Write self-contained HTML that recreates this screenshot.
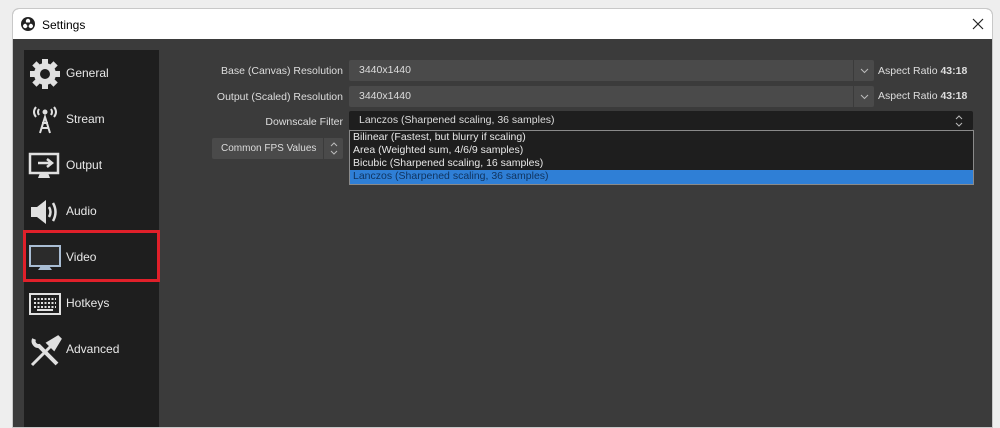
<!DOCTYPE html>
<html><head><style>
*{margin:0;padding:0;box-sizing:border-box}
body{width:1000px;height:416px;background:#eeeeee;font-family:"Liberation Sans",sans-serif;position:relative;overflow:hidden}
.win{position:absolute;left:12px;top:8px;width:981px;height:420px;background:#3b3b3b;border:1px solid #c8c8c8;border-radius:7px 7px 0 0;overflow:hidden}
.title{position:absolute;left:0;top:0;width:100%;height:30px;background:#fff;font-size:12px;color:#000}
.title span{position:absolute;left:29px;top:9px}
.side{position:absolute;left:11px;top:41px;width:135px;height:380px;background:#1e1e1e}
.item{position:absolute;left:0;height:40px;width:135px;color:#e8e8e8;font-size:12px}
.item svg{position:absolute;left:4px;top:4px}
.item span{position:absolute;left:42px;top:13px}
.lab{position:absolute;color:#dedede;font-size:10.5px;text-align:right;width:200px}
.combo{position:absolute;background:#4a4a4a;color:#dcdcdc;font-size:10.5px;border-radius:2px}
.combo span{position:absolute;left:10px;top:4px;white-space:nowrap}
.arr{position:absolute;right:0;top:0;width:21px;height:100%;border-left:1px solid #3b3b3b}
.ar{position:absolute;color:#dedede;font-size:10.5px}
</style></head><body>
<div class="win">
<div class="title">
<svg style="position:absolute;left:8px;top:8px" width="14" height="14" viewBox="0 0 14 14"><circle cx="7" cy="7" r="7" fill="#222"/><circle cx="7" cy="4" r="2.2" fill="#fff"/><circle cx="4.2" cy="9" r="2.2" fill="#fff"/><circle cx="9.8" cy="9" r="2.2" fill="#fff"/><circle cx="7" cy="7" r="1.6" fill="#222"/></svg>
<span>Settings</span>
<svg style="position:absolute;left:959px;top:9px" width="12" height="12" viewBox="0 0 12 12"><path d="M1 1L11 11M11 1L1 11" stroke="#222" stroke-width="1.2"/></svg>
</div>
<div class="side">
<div class="item" style="top:3px"><svg width="34" height="34" viewBox="0 0 34 34"><g fill="#e0e0e0"><circle cx="17" cy="17" r="11"/><rect x="14" y="2" width="6" height="30"/><rect x="2" y="14" width="30" height="6"/><rect x="14" y="2" width="6" height="30" transform="rotate(45 17 17)"/><rect x="14" y="2" width="6" height="30" transform="rotate(-45 17 17)"/></g><circle cx="17" cy="17" r="5" fill="#1e1e1e"/></svg><span>General</span></div>
<div class="item" style="top:49px"><svg width="34" height="34" viewBox="0 0 34 34"><g fill="none" stroke="#e0e0e0" stroke-width="2"><path d="M8 4Q4 9 8 14M26 4Q30 9 26 14M11 6Q9 9 11 12M23 6Q25 9 23 12"/><path d="M12 30L17 14L22 30M13 25H21M14 20H20"/></g><circle cx="17" cy="9" r="2.5" fill="#e0e0e0"/></svg><span>Stream</span></div>
<div class="item" style="top:95px"><svg width="34" height="34" viewBox="0 0 34 34"><rect x="2" y="5" width="28" height="19" fill="none" stroke="#e0e0e0" stroke-width="2.5"/><path d="M12 24h8l2 5h-12z" fill="#e0e0e0"/><path d="M10 14h13M19 10l5 4-5 4" stroke="#e0e0e0" stroke-width="2.5" fill="none"/></svg><span>Output</span></div>
<div class="item" style="top:141px"><svg width="34" height="34" viewBox="0 0 34 34"><path d="M3 12h6l9-7v24l-9-7H3z" fill="#e0e0e0"/><path d="M21 12Q24 17 21 22M25 8Q30 17 25 26" stroke="#e0e0e0" stroke-width="2.5" fill="none"/></svg><span>Audio</span></div>
<div class="item" style="top:187px"><svg width="34" height="34" viewBox="0 0 34 34"><rect x="2" y="5" width="30" height="20" fill="#2b2b2b" stroke="#a9bdd4" stroke-width="2"/><path d="M13 25h8l3 4h-14z" fill="#a9bdd4"/></svg><span>Video</span></div>
<div class="item" style="top:233px"><svg width="34" height="34" viewBox="0 0 34 34"><rect x="2" y="7" width="30" height="20" fill="none" stroke="#e0e0e0" stroke-width="2"/><path d="M6 12h22M6 16h22M6 20h22" stroke="#e0e0e0" stroke-width="2" stroke-dasharray="2 1.5"/><path d="M9 23h16" stroke="#e0e0e0" stroke-width="2"/></svg><span>Hotkeys</span></div>
<div class="item" style="top:279px"><svg width="34" height="34" viewBox="0 0 34 34"><path d="M4 32L22 14M20 10L30 4l2 2-6 10z" stroke="#e0e0e0" stroke-width="3" fill="#e0e0e0"/><path d="M6 6a5 5 0 0 0 5 7l18 18" stroke="#e0e0e0" stroke-width="4" fill="none"/></svg><span>Advanced</span></div>
</div>
<div style="position:absolute;left:10px;top:221px;width:137px;height:52px;border:3px solid #e0202a"></div>
<div class="lab" style="left:130px;top:56px">Base (Canvas) Resolution</div>
<div class="lab" style="left:130px;top:82px">Output (Scaled) Resolution</div>
<div class="lab" style="left:130px;top:107px">Downscale Filter</div>
<div class="combo" style="left:336px;top:51px;width:525px;height:21px"><span>3440x1440</span><div class="arr"><svg width="21" height="21"><path d="M7 9l3.5 3.5L14 9" stroke="#bbb" fill="none"/></svg></div></div>
<div class="combo" style="left:336px;top:77px;width:525px;height:21px"><span>3440x1440</span><div class="arr"><svg width="21" height="21"><path d="M7 9l3.5 3.5L14 9" stroke="#bbb" fill="none"/></svg></div></div>
<div class="ar" style="left:865px;top:56px">Aspect Ratio <b>43:18</b></div>
<div class="ar" style="left:865px;top:81px">Aspect Ratio <b>43:18</b></div>
<div class="combo" style="left:336px;top:102px;width:624px;height:19px;background:#1e1e1e"><span style="top:3px">Lanczos (Sharpened scaling, 36 samples)</span><svg style="position:absolute;left:604px;top:2px" width="12" height="16"><path d="M3 6l3-3 3 3M3 10l3 3 3-3" stroke="#bbb" fill="none"/></svg></div>
<div style="position:absolute;left:336px;top:121px;width:625px;height:55px;background:#1e1e1e;border:1px solid #8a8a8a;font-size:10.5px;color:#e8e8e8;line-height:13px">
<div style="padding-left:3px">Bilinear (Fastest, but blurry if scaling)</div>
<div style="padding-left:3px">Area (Weighted sum, 4/6/9 samples)</div>
<div style="padding-left:3px">Bicubic (Sharpened scaling, 16 samples)</div>
<div style="padding-left:3px;background:#2f7fd6;color:#10335e;height:14px">Lanczos (Sharpened scaling, 36 samples)</div>
</div>
<div class="combo" style="left:199px;top:129px;width:131px;height:21px;background:#4a4a4a"><span style="left:9px;top:5px;font-size:10px">Common FPS Values</span><div class="arr" style="width:20px"><svg width="20" height="21"><path d="M7 8l3-3 3 3M7 13l3 3 3-3" stroke="#bbb" fill="none"/></svg></div></div>
</div>
</body></html>
